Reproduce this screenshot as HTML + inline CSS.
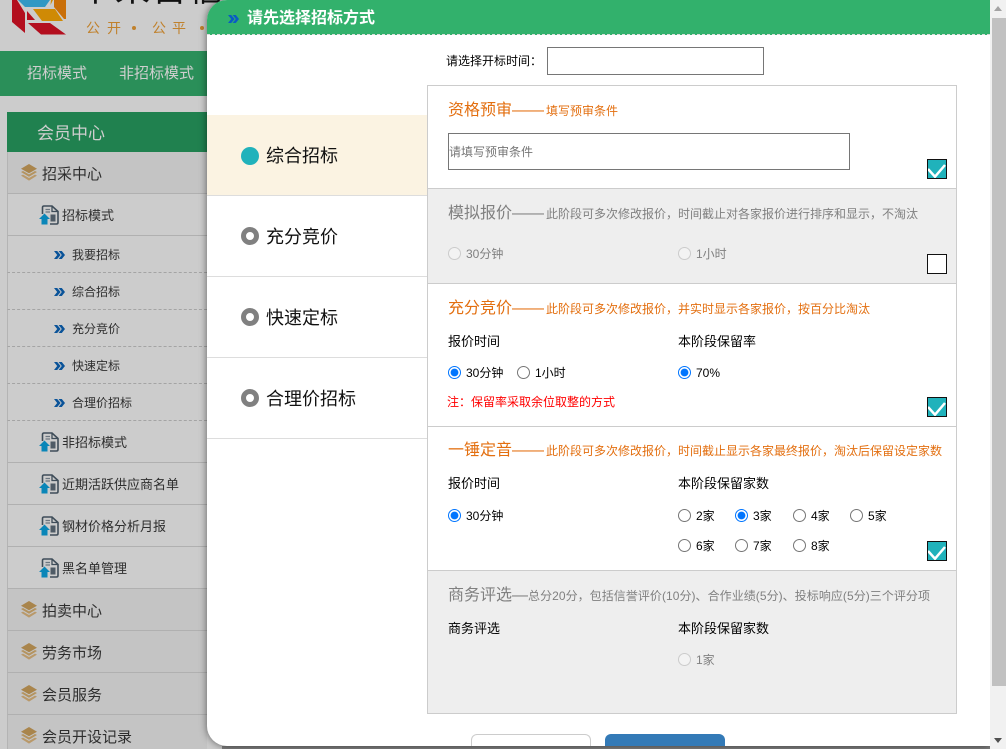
<!DOCTYPE html>
<html lang="zh-CN">
<head>
<meta charset="utf-8">
<title>请先选择招标方式</title>
<style>
html,body{margin:0;padding:0;width:1006px;height:749px;overflow:hidden;background:#ccc}
body{position:relative;font-family:"Liberation Sans","Noto Sans CJK SC",sans-serif;color:#000}
.a,.t,.r,.l{position:absolute}
.t{line-height:20px;white-space:nowrap}
.l{left:7px;width:200px;border-left:1px solid #b4b4b4;border-bottom:1px solid #b0b0b0;box-sizing:border-box}
.top{background:#c4c4c4}
.s1{font-size:15px;color:#2e2e2e}
.s2{font-size:13px;color:#2e2e2e}
.s3{font-size:12px;color:#2e2e2e}
.tab{position:absolute;left:207px;width:220px;height:81px;box-sizing:border-box;border-bottom:1px solid #ddd}
.dot{position:absolute;left:34px;top:31px;width:18px;height:18px;box-sizing:border-box;border-radius:50%;border:5px solid #808080;background:#fff}
.tab span{position:absolute;left:59px;top:27px;font-size:18px;line-height:28px;white-space:nowrap;color:#111}
.sec{position:absolute;left:427px;width:530px;box-sizing:border-box;border:1px solid #ccc}
.title{position:absolute;left:448px;font-size:16px;line-height:24px;white-space:nowrap}
.title small{font-size:12px}
.title i{font-style:normal;display:inline-block;overflow:hidden;height:24px;vertical-align:top}
.o{color:#e36f10}
.g{color:#808080}
.r{margin:0;width:13px;height:13px}
.f12{font-size:12px}.f13{font-size:13px}
.lab{color:#808080}
.cb{position:absolute;left:927px;width:20px;height:20px;box-sizing:border-box;border:1px solid #111;background:#20b2bb}
.cb svg{display:block}
.cb.no{background:#fff}
.lg{position:absolute;top:18px;font-size:14px;line-height:20px;color:#c0812c}
.ld{position:absolute;top:26px;width:4px;height:4px;border-radius:50%;background:#c0812c}
</style>
</head>
<body>
<svg width="0" height="0" style="position:absolute">
<symbol id="lay" viewBox="0 0 16 17">
<path d="M8 0L16 4.8L8 9.2L0 4.8Z" fill="#a9854c"/>
<path d="M0 8L2 7L8 10.4L14 7L16 8L8 12.8Z" fill="#b4935f"/>
<path d="M0 11.6L2 10.6L8 14L14 10.6L16 11.6L8 16.6Z" fill="#b9996a"/>
</symbol>
<symbol id="doc" viewBox="0 0 20 20">
<path d="M3.5 9V2.5Q3.5 1 5 1H13L19 6.5V17.5Q19 19 17.5 19H11" fill="none" stroke="#3f4d59" stroke-width="1.6"/>
<path d="M13 1V6.5H19" fill="none" stroke="#3f4d59" stroke-width="1.3"/>
<path d="M6.5 4.5H11M6.5 7H11" stroke="#6b7680" stroke-width="1.2"/>
<rect x="11.5" y="9.5" width="5" height="7" fill="#4f5b66"/>
<path d="M0 14L5.5 8.5L11 14H8.5V19.5H2.5V14Z" fill="#0a86b8"/>
</symbol>
<symbol id="chev" viewBox="0 0 11 8">
<path d="M0 0H3.2L6.6 4L3.2 8H0L3.2 4Z" fill="#0a5399"/>
<path d="M4.6 0H7.8L11 4L7.8 8H4.6L7.8 4Z" fill="#0a5399"/>
</symbol>
</svg>

<!-- page header -->
<svg class="a" style="left:12px;top:0" width="54" height="35" viewBox="12 0 54 35">
<path d="M12 0H17L25 13V33L12 22Z" fill="#b30e1e"/>
<path d="M28 23H50L66 34.5H41Z" fill="#b30e1e"/>
<path d="M27 11L35 20H27Z" fill="#b30e1e"/>
<path d="M33 9H55L63 21H42Z" fill="#cf8a05"/>
<path d="M18 0H50L45 7H25Z" fill="#3198c4"/>
<path d="M45.500 0H52L50 5Z" fill="#cf8a05" opacity="0"/>
<path d="M51 0H53L50.500 5Z" fill="#cf8a05"/>
<path d="M54 0H66V19H64L54 7Z" fill="#c96f0a"/>
</svg>
<div class="t" style="left:78px;top:-28px;font-size:35px;line-height:36px;letter-spacing:2px;color:#111">中采首信</div>
<span class="lg" style="left:86px">公</span>
<span class="lg" style="left:107px">开</span>
<i class="ld" style="left:132px"></i>
<span class="lg" style="left:152px">公</span>
<span class="lg" style="left:172px">平</span>
<i class="ld" style="left:200px"></i>

<div class="a" style="left:0;top:51px;width:207px;height:45px;background:#2a8f59"></div>
<div class="t" style="left:27px;top:64px;font-size:15px;color:#cfcfcf">招标模式</div>
<div class="t" style="left:119px;top:64px;font-size:15px;color:#cfcfcf">非招标模式</div>

<!-- sidebar -->
<div class="a" style="left:7px;top:112px;width:200px;height:40px;background:#20814f"></div>
<div class="t" style="left:37px;top:124px;font-size:17px;color:#cfcfcf">会员中心</div>

<div class="l top" style="top:152px;height:42px"></div>
<div class="l" style="top:194px;height:42px"></div>
<div class="l" style="top:236px;height:37px;border-bottom:1px dashed #a4a4a4"></div>
<div class="l" style="top:273px;height:37px;border-bottom:1px dashed #a4a4a4"></div>
<div class="l" style="top:310px;height:37px;border-bottom:1px dashed #a4a4a4"></div>
<div class="l" style="top:347px;height:37px;border-bottom:1px dashed #a4a4a4"></div>
<div class="l" style="top:384px;height:37px;border-bottom:1px dashed #a4a4a4"></div>
<div class="l" style="top:421px;height:42px"></div>
<div class="l" style="top:463px;height:42px"></div>
<div class="l" style="top:505px;height:42px"></div>
<div class="l" style="top:547px;height:42px"></div>
<div class="l top" style="top:589px;height:42px"></div>
<div class="l top" style="top:631px;height:42px"></div>
<div class="l top" style="top:673px;height:42px"></div>
<div class="l top" style="top:715px;height:34px;border-bottom:0"></div>

<svg class="a" style="left:21px;top:164px" width="16" height="17"><use href="#lay"/></svg>
<div class="t s1" style="left:42px;top:165px">招采中心</div>
<svg class="a" style="left:39px;top:205px" width="20" height="20"><use href="#doc"/></svg>
<div class="t s2" style="left:62px;top:206px">招标模式</div>
<svg class="a" style="left:54px;top:251px" width="11" height="8"><use href="#chev"/></svg>
<div class="t s3" style="left:72px;top:245px">我要招标</div>
<svg class="a" style="left:54px;top:288px" width="11" height="8"><use href="#chev"/></svg>
<div class="t s3" style="left:72px;top:282px">综合招标</div>
<svg class="a" style="left:54px;top:325px" width="11" height="8"><use href="#chev"/></svg>
<div class="t s3" style="left:72px;top:319px">充分竞价</div>
<svg class="a" style="left:54px;top:362px" width="11" height="8"><use href="#chev"/></svg>
<div class="t s3" style="left:72px;top:356px">快速定标</div>
<svg class="a" style="left:54px;top:399px" width="11" height="8"><use href="#chev"/></svg>
<div class="t s3" style="left:72px;top:393px">合理价招标</div>
<svg class="a" style="left:39px;top:432px" width="20" height="20"><use href="#doc"/></svg>
<div class="t s2" style="left:62px;top:433px">非招标模式</div>
<svg class="a" style="left:39px;top:474px" width="20" height="20"><use href="#doc"/></svg>
<div class="t s2" style="left:62px;top:475px">近期活跃供应商名单</div>
<svg class="a" style="left:39px;top:516px" width="20" height="20"><use href="#doc"/></svg>
<div class="t s2" style="left:62px;top:517px">钢材价格分析月报</div>
<svg class="a" style="left:39px;top:558px" width="20" height="20"><use href="#doc"/></svg>
<div class="t s2" style="left:62px;top:559px">黑名单管理</div>
<svg class="a" style="left:21px;top:601px" width="16" height="17"><use href="#lay"/></svg>
<div class="t s1" style="left:42px;top:602px">拍卖中心</div>
<svg class="a" style="left:21px;top:643px" width="16" height="17"><use href="#lay"/></svg>
<div class="t s1" style="left:42px;top:644px">劳务市场</div>
<svg class="a" style="left:21px;top:685px" width="16" height="17"><use href="#lay"/></svg>
<div class="t s1" style="left:42px;top:686px">会员服务</div>
<svg class="a" style="left:21px;top:727px" width="16" height="17"><use href="#lay"/></svg>
<div class="t s1" style="left:42px;top:728px">会员开设记录</div>

<!-- modal -->
<div class="a" style="left:222px;top:746px;width:768px;height:3px;background:#808080"></div>
<div class="a" style="left:207px;top:0;width:783px;height:746px;background:#fff;border-radius:20px 0 0 20px;box-shadow:0 0 8px rgba(0,0,0,.55);overflow:hidden">
  <div class="a" style="left:0;top:0;width:783px;height:34px;background:#32b16c;border-bottom:1px dashed #dcdcdc"></div>
</div>
<svg class="a" style="left:228px;top:15px" width="11" height="8"><path d="M0 0H3.200L6.600 4L3.200 8H0L3.200 4Z" fill="#0a5cc4"/><path d="M4.600 0H7.800L11 4L7.800 8H4.600L7.800 4Z" fill="#0a5cc4"/></svg>
<div class="t" style="left:247px;top:9px;font-size:16px;font-weight:bold;color:#fff">请先选择招标方式</div>

<!-- tabs -->
<div class="tab" style="top:115px;background:#fbf3e2"><b class="dot" style="top:32px;border:0;background:#20b2bb"></b><span>综合招标</span></div>
<div class="tab" style="top:196px"><b class="dot"></b><span>充分竞价</span></div>
<div class="tab" style="top:277px"><b class="dot"></b><span>快速定标</span></div>
<div class="tab" style="top:358px"><b class="dot"></b><span>合理价招标</span></div>

<!-- open time -->
<div class="t f12" style="left:446px;top:51px">请选择开标时间：</div>
<div class="a" style="left:547px;top:47px;width:217px;height:28px;box-sizing:border-box;border:1px solid #767676;background:#fff"></div>

<!-- sections -->
<div class="sec" style="top:85px;height:104px;background:#fff"></div>
<div class="sec" style="top:188px;height:96px;background:#eee"></div>
<div class="sec" style="top:283px;height:144px;background:#fff"></div>
<div class="sec" style="top:426px;height:145px;background:#fff"></div>
<div class="sec" style="top:570px;height:144px;background:#eee"></div>

<!-- s1 -->
<div class="title o" style="top:99px">资格预审<i style="width:34px">——</i><small>填写预审条件</small></div>
<div class="a" style="left:448px;top:133px;width:402px;height:37px;box-sizing:border-box;border:1px solid #767676;background:#fff"></div>
<div class="t f12" style="left:449px;top:142px;color:#757575">请填写预审条件</div>
<div class="cb" style="top:159px"><svg width="18" height="18" viewBox="0 0 18 18"><path d="M0 9L7 16.700L17 5" fill="none" stroke="#fff" stroke-width="2.500"/></svg></div>

<!-- s2 -->
<div class="title g" style="top:202px">模拟报价<i style="width:34px">——</i><small>此阶段可多次修改报价，时间截止对各家报价进行排序和显示，不淘汰</small></div>
<input class="r" type="radio" disabled style="left:448px;top:247px">
<div class="t f12 lab" style="left:466px;top:244px">30分钟</div>
<input class="r" type="radio" disabled style="left:678px;top:247px">
<div class="t f12 lab" style="left:696px;top:244px">1小时</div>
<div class="cb no" style="top:254px"></div>

<!-- s3 -->
<div class="title o" style="top:297px">充分竞价<i style="width:34px">——</i><small>此阶段可多次修改报价，并实时显示各家报价，按百分比淘汰</small></div>
<div class="t f13" style="left:448px;top:332px">报价时间</div>
<div class="t f13" style="left:678px;top:332px">本阶段保留率</div>
<input class="r" type="radio" checked name="a" style="left:448px;top:366px">
<div class="t f12" style="left:466px;top:363px">30分钟</div>
<input class="r" type="radio" name="a" style="left:517px;top:366px">
<div class="t f12" style="left:535px;top:363px">1小时</div>
<input class="r" type="radio" checked name="b" style="left:678px;top:366px">
<div class="t f12" style="left:696px;top:363px">70%</div>
<div class="t f12" style="left:447px;top:392px;color:#f00">注：保留率采取余位取整的方式</div>
<div class="cb" style="top:397px"><svg width="18" height="18" viewBox="0 0 18 18"><path d="M0 9L7 16.700L17 5" fill="none" stroke="#fff" stroke-width="2.500"/></svg></div>

<!-- s4 -->
<div class="title o" style="top:439px">一锤定音<i style="width:34px">——</i><small>此阶段可多次修改报价，时间截止显示各家最终报价，淘汰后保留设定家数</small></div>
<div class="t f13" style="left:448px;top:474px">报价时间</div>
<div class="t f13" style="left:678px;top:474px">本阶段保留家数</div>
<input class="r" type="radio" checked name="c" style="left:448px;top:509px">
<div class="t f12" style="left:466px;top:506px">30分钟</div>
<input class="r" type="radio" name="d" style="left:678px;top:509px">
<div class="t f12" style="left:696px;top:506px">2家</div>
<input class="r" type="radio" name="d" checked style="left:735px;top:509px">
<div class="t f12" style="left:753px;top:506px">3家</div>
<input class="r" type="radio" name="d" style="left:793px;top:509px">
<div class="t f12" style="left:811px;top:506px">4家</div>
<input class="r" type="radio" name="d" style="left:850px;top:509px">
<div class="t f12" style="left:868px;top:506px">5家</div>
<input class="r" type="radio" name="d" style="left:678px;top:539px">
<div class="t f12" style="left:696px;top:536px">6家</div>
<input class="r" type="radio" name="d" style="left:735px;top:539px">
<div class="t f12" style="left:753px;top:536px">7家</div>
<input class="r" type="radio" name="d" style="left:793px;top:539px">
<div class="t f12" style="left:811px;top:536px">8家</div>
<div class="cb" style="top:541px"><svg width="18" height="18" viewBox="0 0 18 18"><path d="M0 9L7 16.700L17 5" fill="none" stroke="#fff" stroke-width="2.500"/></svg></div>

<!-- s5 -->
<div class="title g" style="top:584px">商务评选<i style="width:16px">—</i><small style="letter-spacing:.05px">总分20分，包括信誉评价(10分)、合作业绩(5分)、投标响应(5分)三个评分项</small></div>
<div class="t f13" style="left:448px;top:619px">商务评选</div>
<div class="t f13" style="left:678px;top:619px">本阶段保留家数</div>
<input class="r" type="radio" disabled style="left:678px;top:653px">
<div class="t f12 lab" style="left:696px;top:650px">1家</div>

<!-- buttons -->
<div class="a" style="left:471px;top:734px;width:120px;height:12px;box-sizing:border-box;border:1px solid #ccc;border-bottom:0;border-radius:6px 6px 0 0;background:#fff"></div>
<div class="a" style="left:605px;top:734px;width:120px;height:12px;border-radius:6px 6px 0 0;background:#337ab7"></div>

<!-- scrollbar -->
<div class="a" style="left:990px;top:0;width:16px;height:749px;background:#f1f1f1"></div>
<div class="a" style="left:992px;top:18px;width:14px;height:668px;background:#c1c1c1"></div>
<svg class="a" style="left:993px;top:5px" width="10" height="7"><path d="M5 1L9 6H1Z" fill="#a3a3a3"/></svg>
<svg class="a" style="left:993px;top:737px" width="10" height="7"><path d="M1 1H9L5 6Z" fill="#505050"/></svg>
</body>
</html>
